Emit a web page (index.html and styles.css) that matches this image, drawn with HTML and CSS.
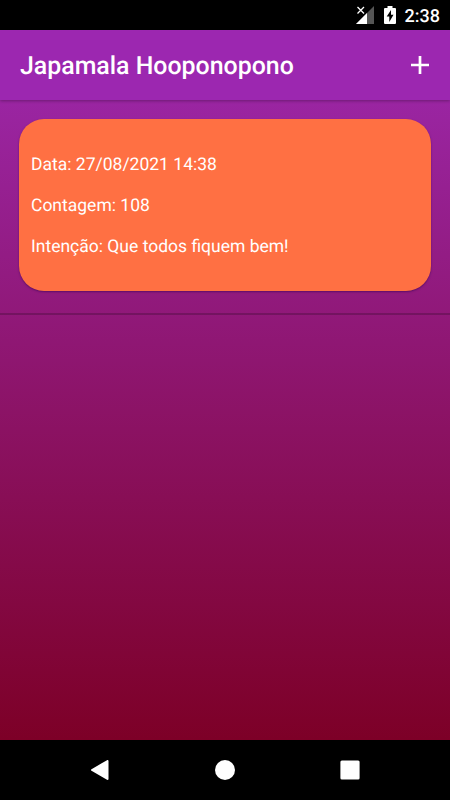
FILE: index.html
```
<!DOCTYPE html>
<html lang="pt-BR">
<head>
  <meta charset="UTF-8">
  <title>Japamala Hooponopono</title>
  <link rel="stylesheet" href="styles.css">
</head>
<body>
  <div class="status-bar">
    <svg class="signal" width="18" height="18" viewBox="0 0 18 18">
      <path d="M0 18 L18 0 V18 Z" fill="#555"/>
      <path d="M0 18 L11 7 V18 Z" fill="#fff"/>
      <path d="M1.5 1 L8 7.5 M8 1 L1.5 7.5" stroke="#fff" stroke-width="1.3"/>
    </svg>
    <svg class="battery" width="12" height="18" viewBox="0 0 12 18">
      <path d="M3.5 0h5v2H11q1 0 1 1v14q0 1-1 1H1q-1 0-1-1V3q0-1 1-1h2.5z" fill="#fff"/>
      <path d="M7 4 L2.7 10.6 H5.3 V16 L9.5 8.7 H7 Z" fill="#000"/>
    </svg>
    <span class="clock">2:38</span>
  </div>

  <header class="app-bar">
    <h1>Japamala Hooponopono</h1>
    <button class="add" aria-label="Adicionar">
      <svg width="18" height="18" viewBox="0 0 18 18">
        <path d="M9 0 V18 M0 9 H18" stroke="#fff" stroke-width="2.7"/>
      </svg>
    </button>
  </header>

  <main class="content">
    <div class="item">
      <div class="card">
        <p>Data: 27/08/2021 14:38</p>
        <p>Contagem: 108</p>
        <p>Intenção: Que todos fiquem bem!</p>
      </div>
    </div>
  </main>

  <nav class="nav-bar">
    <svg width="20" height="20" viewBox="0 0 20 20"><path d="M17.5 1 V19 L2 10 Z" fill="#fff" stroke="#fff" stroke-width="2" stroke-linejoin="round"/></svg>
    <svg width="20" height="20" viewBox="0 0 20 20"><circle cx="10" cy="10" r="10" fill="#fff"/></svg>
    <svg width="20" height="20" viewBox="0 0 20 20"><rect x="0.4" y="0.4" width="19.2" height="19.2" rx="1.5" fill="#fff"/></svg>
  </nav>
</body>
</html>
```

FILE: styles.css
```
* {
  box-sizing: border-box;
}
body {
  margin: 0;
  height: 800px;
  display: flex;
  flex-direction: column;
  font-family: Roboto, sans-serif;
  color: #fff;
  background: #000;
  overflow: hidden;
  text-rendering: geometricPrecision;
}
.status-bar {
  height: 30px;
  display: flex;
  align-items: center;
  justify-content: flex-end;
  padding-right: 10px;
}
.battery {
  margin-left: 10px;
}
.clock {
  margin: 2px 0 0 9px;
  font-size: 18px;
  font-weight: 500;
}
.app-bar {
  height: 70px;
  display: flex;
  align-items: center;
  justify-content: space-between;
  padding: 0 21px 0 20px;
  background: #9c27b0;
  box-shadow: 0 1px 3px rgba(0,0,0,0.3);
  z-index: 1;
}
.app-bar h1 {
  margin: 3px 0 0;
  font-size: 24.9px;
  font-weight: 500;
}
.add {
  display: flex;
  padding: 0;
  border: none;
  background: none;
}
.content {
  flex: 1;
  background: linear-gradient(#9a25a2, #7d0027);
}
.item {
  height: 215px;
  padding: 19px;
  border-bottom: 2px solid rgba(0,0,0,0.2);
}
.card {
  height: 172px;
  padding: 36px 12px;
  border-radius: 25px;
  background: #ff7043;
  box-shadow: 0 1px 2px rgba(40,0,80,0.5);
}
.card p {
  margin: 0 0 20px;
  font-size: 17.5px;
  line-height: 21px;
}
.nav-bar {
  height: 60px;
  display: flex;
  align-items: center;
  justify-content: center;
  gap: 105px;
}
```
